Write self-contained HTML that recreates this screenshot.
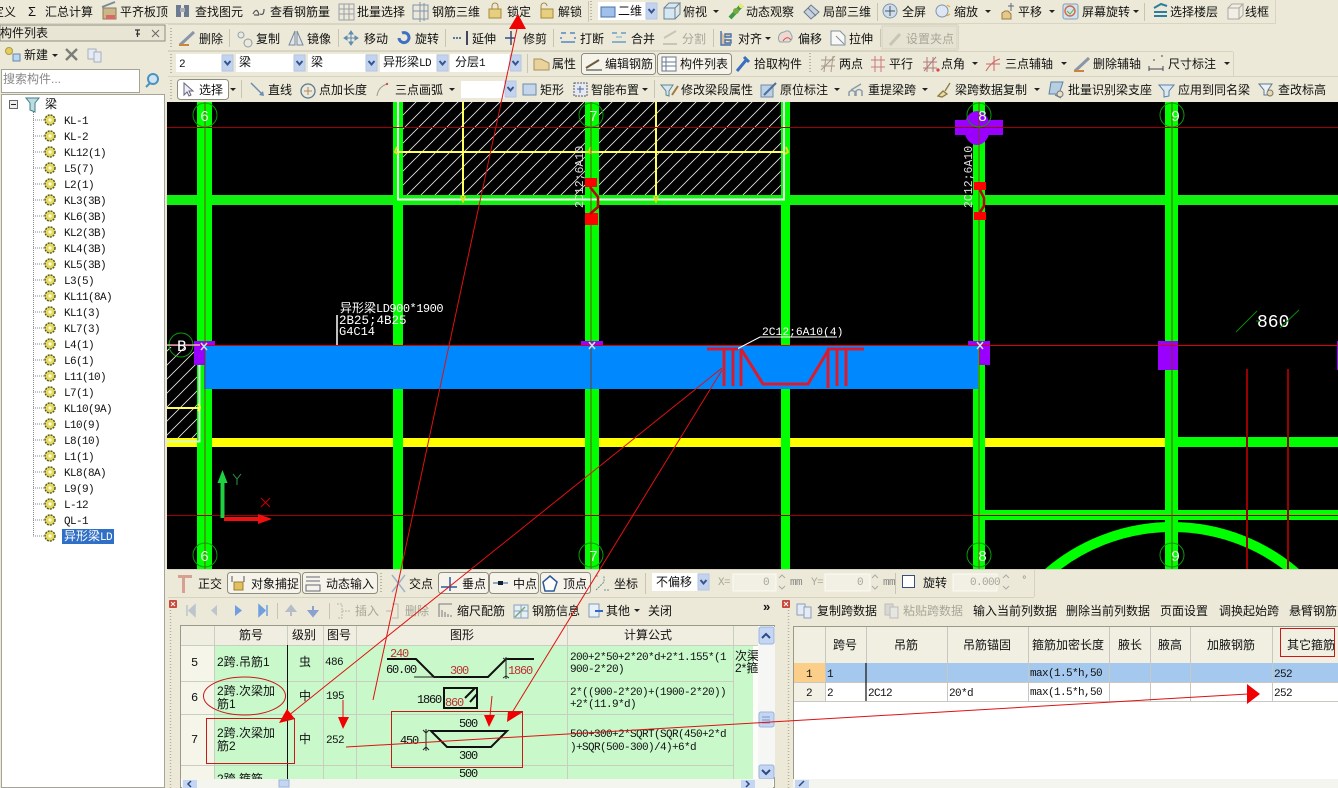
<!DOCTYPE html>
<html lang="zh-CN">
<head>
<meta charset="utf-8">
<title>钢筋算量</title>
<style>
html,body{margin:0;padding:0;width:1338px;height:788px;overflow:hidden;background:#ece9d8}
svg{display:block;position:absolute;left:0;top:0}
text{font-family:"Liberation Sans","WenQuanYi Zen Hei","Noto Sans CJK SC",sans-serif;font-size:12px;fill:#111;white-space:pre}
.g{fill:#a8a698}
.m{font-family:"Liberation Mono","WenQuanYi Zen Hei",monospace;font-size:11px;letter-spacing:-.6px}
.n{font-family:"Liberation Mono","WenQuanYi Zen Hei",monospace;font-size:12px;letter-spacing:-1.2px}
.cad{font-family:"Liberation Mono","WenQuanYi Zen Hei",monospace;fill:#fff}
.r{fill:#b33}
</style>
</head>
<body>
<svg width="1338" height="788" viewBox="0 0 1338 788" xmlns="http://www.w3.org/2000/svg">
<defs>
<pattern id="h" patternUnits="userSpaceOnUse" width="14" height="14"><path d="M0 14L14 0M-2 2L2 -2M12 16L16 12" stroke="#e8e8e8" stroke-width=".8"/></pattern>
<g id="cb"><rect x="0" y="0" width="11" height="16" fill="#c3d3ee" stroke="#b4c6e6"/><path d="M2.5 6l3 3.5 3-3.5" fill="none" stroke="#34558f" stroke-width="2"/></g>
<g id="ar"><path d="M0 0h6l-3 3z" fill="#222"/></g>
<g id="gr"><path d="M-17 0h11" stroke="#888" stroke-dasharray="1 1"/><circle r="5" fill="#e5dc5a" stroke="#5a5a20" stroke-dasharray="2 1" stroke-width="1.5"/><circle r="1.5" fill="#fff"/></g>
<g id="grip"><path d="M0 0V20" stroke="#a9a590" stroke-dasharray="1 2" stroke-width="1.5"/></g>
</defs>

<!-- TOOLBAR BANDS -->
<rect width="1338" height="788" fill="#ece9d8"/>
<path d="M0 23.5H1276M1275.5 0V23" stroke="#d8d5c3"/>
<path d="M168 24.5H958M958.5 25V50M168 50.5H958" stroke="#d8d5c3"/>
<path d="M168 51.5H1233M1233.5 52V76M168 76.5H1338" stroke="#d6d3c0"/>
<path d="M588.5 1V22M877.5 3V21M1144.5 3V21M229.5 29V47M338.5 29V47M445.5 29V47M553.5 29V47M713.5 29V47M880.5 29V47M527.5 54V73M241.5 80V98M654.5 80V98" stroke="#c8c5b2"/>
<use href="#grip" x="171" y="28"/><use href="#grip" x="171" y="54"/><use href="#grip" x="171" y="80"/><use href="#grip" x="810" y="53"/><use href="#grip" x="381" y="573"/><use href="#grip" x="591" y="1"/>

<!-- ROW 1 -->
<text x="-8" y="16">定义</text>
<text x="28" y="16" style="font-size:13px">Σ</text><text x="45" y="16">汇总计算</text>
<g><rect x="103" y="8" width="13" height="11" fill="#c9b78a" stroke="#8a7a55"/><path d="M102 7l13-5" stroke="#7a8a9a" stroke-width="2"/><rect x="106" y="15" width="9" height="4" fill="#d66"/></g><text x="120" y="16">平齐板顶</text>
<g fill="#6a7a90"><rect x="176" y="5" width="5" height="12"/><rect x="184" y="5" width="5" height="12"/><rect x="180" y="8" width="5" height="4" fill="#aab"/></g><text x="195" y="16">查找图元</text>
<path d="M253 14q3-6 5-2t-1 3h-3M260 14q4 2 4-5" fill="none" stroke="#555" stroke-width="1.2"/><text x="270" y="16">查看钢筋量</text>
<path d="M339 4h15v16h-15zM339 9h15M339 14h15M344 4v16M349 4v16" fill="none" stroke="#9aa0a8"/><text x="357" y="16">批量选择</text>
<path d="M413 5h15v14h-15zM420 2v20M413 11h15M424 3v18" fill="none" stroke="#7f93ad"/><text x="432" y="16">钢筋三维</text>
<g><rect x="489" y="9" width="12" height="9" fill="#e8cf7f" stroke="#a58a3d"/><path d="M492 9V6a3 3 0 0 1 6 0v3" fill="none" stroke="#a58a3d"/></g><text x="507" y="16">锁定</text>
<g><rect x="541" y="9" width="12" height="9" fill="#e8cf7f" stroke="#a58a3d"/><path d="M541 9V6a3 3 0 0 1 6 0" fill="none" stroke="#a58a3d"/></g><text x="558" y="16">解锁</text>
<rect x="598" y="2" width="48" height="18" fill="#fff"/><rect x="601" y="7" width="14" height="10" fill="#9fc0ea" stroke="#4a70a8"/><text x="618" y="15">二维</text><use href="#cb" x="646" y="3"/>
<path d="M664 8h11v11h-11zM664 8l5-5h11l-5 5M675 19l5-5V3" fill="#d5e7f2" stroke="#6c8296"/><text x="683" y="16">俯视</text><use href="#ar" x="713" y="10"/>
<path d="M730 18l12-13" stroke="#3d9a44" stroke-width="4"/><circle cx="736" cy="11" r="3" fill="#7a4"/><circle cx="741" cy="6" r="2" fill="#ee6"/><text x="746" y="16">动态观察</text>
<path d="M804 12l7-7 8 7-8 7z" fill="#c8d2dd" stroke="#6a7a8c"/><path d="M808 8l8 8" stroke="#6a7a8c"/><text x="823" y="16">局部三维</text>
<circle cx="890" cy="11" r="7" fill="#cfdcea" stroke="#7f95ad"/><path d="M890 6v10M885 11h10" stroke="#456" /><text x="902" y="16">全屏</text>
<circle cx="942" cy="11" r="6" fill="#dde6f2" stroke="#7f95ad"/><path d="M947 5l3 2M947 16l3-2" stroke="#e49a20"/><text x="954" y="16">缩放</text><use href="#ar" x="985" y="10"/>
<path d="M1002 19v-6l3-2 3 0 3 3 0 5z" fill="#e6c98a" stroke="#9a7a44"/><path d="M1011 3v8M1008 6h6" stroke="#667"/><text x="1018" y="16">平移</text><use href="#ar" x="1049" y="10"/>
<rect x="1063" y="4" width="15" height="15" rx="2" fill="#cfe4ee" stroke="#7fa0b8"/><circle cx="1070" cy="11" r="5" fill="none" stroke="#d9654a" stroke-width="1.4"/><path d="M1067 11l3 3 4-5" fill="none" stroke="#6a4"/><text x="1082" y="16">屏幕旋转</text><use href="#ar" x="1133" y="10"/>
<path d="M1154 8l7-4 6 2M1154 12h13M1154 16h13" fill="none" stroke="#2c7ea0" stroke-width="2"/><text x="1170" y="16">选择楼层</text>
<path d="M1228 8h11v11h-11zM1228 8l4-4h11l-4 4M1239 19l4-4V4" fill="#f2f0e6" stroke="#a9a9a0"/><text x="1245" y="16">线框</text>

<!-- ROW 2 -->
<path d="M180 45l14-13" stroke="#8a96a8" stroke-width="3"/><path d="M179 45h10" stroke="#c9863a" stroke-width="2"/><text x="199" y="43">删除</text>
<circle cx="241" cy="35" r="3" fill="none" stroke="#8fa2b6"/><circle cx="248" cy="43" r="4" fill="none" stroke="#8f9aa6"/><text x="256" y="43">复制</text>
<path d="M289 45l6-14v14zM303 45l-6-14v14z" fill="#dfe5ed" stroke="#7a8a9a"/><text x="307" y="43">镜像</text>
<path d="M351 31v14M344 38h14M351 31l-2 3h4zM351 45l-2-3h4zM344 38l3-2v4zM358 38l-3-2v4z" fill="#5e8bb0" stroke="#5e8bb0"/><text x="364" y="43">移动</text>
<path d="M399 38a5 5 0 1 0 3-5" fill="none" stroke="#3f70c4" stroke-width="3"/><text x="415" y="43">旋转</text>
<path d="M453 38h8" stroke="#5878a0" stroke-dasharray="2 1" stroke-width="2"/><path d="M467 31v14" stroke="#446" stroke-width="2"/><text x="472" y="43">延伸</text>
<path d="M505 38h10" stroke="#5878a0" stroke-width="2"/><path d="M511 31v14" stroke="#446" stroke-width="1.5"/><text x="523" y="43">修剪</text>
<path d="M561 33h5M570 33h5M561 42h14M561 37v2M575 37v2" stroke="#7aa0c8" stroke-width="2"/><text x="580" y="43">打断</text>
<path d="M612 33h5M621 33h5M612 42h14" stroke="#8ab0c8" stroke-width="2"/><path d="M616 37h6" stroke="#7ac" /><text x="631" y="43">合并</text>
<path d="M663 44h14M664 38l12-7" stroke="#c8c5b4" stroke-width="2"/><text class="g" x="682" y="43">分割</text>
<path d="M721 31v14h10M725 34h6v3h-6zM725 40h6v3h-6z" fill="#d8c2a0" stroke="#4a72a8" stroke-width="1.4"/><text x="738" y="43">对齐</text><use href="#ar" x="765" y="37"/>
<path d="M780 42a6 6 0 0 1 4-10q5-3 7 2 3 5-2 8z" fill="#f0d8d0" stroke="#8aa"/><path d="M783 41q4-6 8-1" stroke="#c55" fill="none"/><text x="798" y="43">偏移</text>
<path d="M831 31h9l5 5v9h-14zM836 36l8 8" fill="#f8f8f4" stroke="#7f8f9f"/><text x="849" y="43">拉伸</text>
<rect x="882" y="26" width="75" height="23" fill="#e6e3d2" stroke="#d5d2c0"/><path d="M890 45l10-11" stroke="#c8c5b4" stroke-width="3"/><text class="g" x="906" y="43">设置夹点</text>

<!-- ROW 3 -->
<g><rect x="176" y="54" width="46" height="18" fill="#fff"/><text class="m" x="179" y="67">2</text><use href="#cb" x="222" y="55"/>
<rect x="236" y="54" width="58" height="18" fill="#fff"/><text x="239" y="66">梁</text><use href="#cb" x="294" y="55"/>
<rect x="308" y="54" width="58" height="18" fill="#fff"/><text x="311" y="66">梁</text><use href="#cb" x="366" y="55"/>
<rect x="380" y="54" width="57" height="18" fill="#fff"/><text x="383" y="66">异形梁<tspan class="m">LD</tspan></text><use href="#cb" x="437" y="55"/>
<rect x="450" y="54" width="60" height="18" fill="#fff"/><text x="455" y="66">分层<tspan class="m">1</tspan></text><use href="#cb" x="510" y="55"/></g>
<path d="M534 59h7l8 4v7h-15z" fill="#e9d39a" stroke="#a89060"/><text x="552" y="68">属性</text>
<rect x="581.500" y="53.500" width="74" height="21" rx="3" fill="#f6f4ea" stroke="#8d8d80"/><path d="M586 68l13-8" stroke="#6a5a3a" stroke-width="2"/><path d="M586 70h16" stroke="#333"/><text x="605" y="68">编辑钢筋</text>
<rect x="657.500" y="53.500" width="74" height="21" rx="3" fill="#f6f4ea" stroke="#8d8d80"/><path d="M662 57h14v14h-14zM666 57v14M662 62h14M662 66h14" fill="#fff" stroke="#66788c"/><text x="680" y="68">构件列表</text>
<path d="M737 71l10-12M744 57l5 5" stroke="#3a6fc0" stroke-width="3"/><text x="754" y="68">拾取构件</text>
<path d="M821 60h14M821 66h14M826 56l-2 16M833 56l-2 16M821 70l14-14" stroke="#a89888" fill="none"/><text x="839" y="68">两点</text>
<path d="M871 60h14M871 67h14M875 56v16M881 56v16" stroke="#c87a7a" fill="none"/><text x="889" y="68">平行</text>
<path d="M923 62h14M923 68h14M927 57v15M933 57v15M924 71l12-14" stroke="#b07a7a" fill="none"/><circle cx="938" cy="70" r="1.600" fill="#d44"/><text x="941" y="68">点角</text><use href="#ar" x="972" y="62"/>
<path d="M986 64h14M994 56v15M986 71q6-10 14-12" stroke="#c66" fill="none"/><text x="1005" y="68">三点辅轴</text><use href="#ar" x="1061" y="62"/>
<path d="M1075 71l14-13" stroke="#8a96a8" stroke-width="3"/><path d="M1074 71h10" stroke="#c9863a" stroke-width="2"/><text x="1093" y="68">删除辅轴</text>
<path d="M1149 69h14M1149 66v5M1163 66v5M1153 60h2M1161 56h2" stroke="#445"/><text x="1168" y="68">尺寸标注</text><use href="#ar" x="1224" y="62"/>

<!-- ROW 4 -->
<rect x="177.500" y="79.500" width="51" height="20" rx="3" fill="#fff" stroke="#8d8d80"/><path d="M184 83v12l3-3 2 4 2-1-2-4h4z" fill="#eef" stroke="#667"/><text x="199" y="94">选择</text><use href="#ar" x="230" y="88"/>
<path d="M251 83l12 12" stroke="#6a8cb0" stroke-width="1.500"/><path d="M264 96l-5-1 4-4z" fill="#6a8cb0"/><text x="268" y="94">直线</text>
<circle cx="308" cy="91" r="7" fill="none" stroke="#5a7a90" stroke-width="1.300"/><path d="M304 91h8M308 87v8" stroke="#a86"/><text x="319" y="94">点加长度</text>
<path d="M377 96q1-9 10-12" fill="none" stroke="#998"/><circle cx="387" cy="84" r="1.200" fill="#c55"/><text x="395" y="94">三点画弧</text><use href="#ar" x="449" y="88"/>
<rect x="461" y="81" width="44" height="17" fill="#fff"/><use href="#cb" x="505" y="81"/>
<rect x="523" y="84" width="13" height="11" fill="#c5d6ea" stroke="#6c8cb0"/><text x="540" y="94">矩形</text>
<rect x="574" y="83" width="13" height="13" fill="#e6eaf0" stroke="#556" stroke-dasharray="2 1"/><path d="M580 86v7M577 89h7" stroke="#46a"/><text x="591" y="94">智能布置</text><use href="#ar" x="642" y="88"/>
<path d="M661 85h12l-4 6v5l-3-1v-4z" fill="#d8e6f0" stroke="#5a8a90"/><path d="M672 95l6-9" stroke="#9a7a44" stroke-width="2"/><text x="681" y="94">修改梁段属性</text>
<rect x="761" y="85" width="12" height="12" fill="#bcd0e6" stroke="#6f8cab"/><path d="M764 95l12-12" stroke="#4a6f9c" stroke-width="2"/><text x="780" y="94">原位标注</text><use href="#ar" x="834" y="88"/>
<path d="M849 96v-4q3-3 6 0v4M856 96v-5q3-3 6 0v5M851 90l10-6" fill="none" stroke="#8a9aa8" stroke-width="1.500"/><text x="868" y="94">重提梁跨</text><use href="#ar" x="922" y="88"/>
<path d="M938 96l5-5 4 3-5 3zM945 91l5-8" fill="#e8dca0" stroke="#8a7a44" stroke-width="1.300"/><text x="955" y="94">梁跨数据复制</text><use href="#ar" x="1034" y="88"/>
<path d="M1049 94h10l4-12h-12zM1055 95l6 3" fill="#b6cee0" stroke="#5a82a6"/><circle cx="1060" cy="94" r="3" fill="#e8e2c8" stroke="#777"/><text x="1068" y="94">批量识别梁支座</text>
<path d="M1159 85h15l-5 6v5l-5 1v-6z" fill="#dbe8f2" stroke="#5a82a6"/><text x="1178" y="94">应用到同名梁</text>
<path d="M1259 84h13l-4 6v5h-4v-5z" fill="#eef2f6" stroke="#5a7a8c"/><circle cx="1270" cy="93" r="3" fill="#ead9a8" stroke="#777"/><text x="1278" y="94">查改标高</text>

<!-- LEFT PANEL -->
<rect x="0" y="25" width="165" height="16" fill="#e8e5d5" stroke="#8e8d80"/>
<text x="0" y="37" style="font-size:12px">构件列表</text>
<path d="M135 30h5M137.500 30v7M136 34h4" stroke="#333" stroke-width="1.200"/><path d="M152 30l7 7M159 30l-7 7" stroke="#666"/>
<circle cx="9" cy="51" r="3.500" fill="#e6cd62" stroke="#b09a3a"/><rect x="13" y="54" width="7" height="7" fill="#bcd6ef" stroke="#5f89b0"/><text x="24" y="59">新建</text><use href="#ar" x="52" y="54"/>
<path d="M66 49l11 11M77 49l-11 11" stroke="#7d7d78" stroke-width="2.400"/>
<path d="M88 49h8v10h-8z" fill="#e6eaf2" stroke="#a6b0c0"/><path d="M94 52h7v10h-7z" fill="#e6eaf2" stroke="#a6b0c0"/>
<rect x="1.500" y="69.500" width="138" height="23" fill="#fff" stroke="#a6a496"/><text x="3" y="83" fill="#8a8a8a" style="fill:#888">搜索构件...</text>
<circle cx="153" cy="79" r="5" fill="#cfe5f3" stroke="#4d93bf" stroke-width="2"/><path d="M150 83l-4 4" stroke="#4d93bf" stroke-width="2"/>
<rect x="1.500" y="94.500" width="163" height="693" fill="#fff" stroke="#a6a496"/>
<path d="M33.500 112V536" stroke="#888" stroke-dasharray="1 1"/>
<rect x="9.500" y="100.500" width="8" height="8" fill="#eee" stroke="#666"/><path d="M11 104.500h5" stroke="#222"/>
<path d="M26 98h13l-4 5v9l-5-2v-7z" fill="#bcdde0" stroke="#3f7d8c"/><text x="45" y="108">梁</text>
<use href="#gr" x="50" y="120"/><use href="#gr" x="50" y="136"/><use href="#gr" x="50" y="152"/><use href="#gr" x="50" y="168"/><use href="#gr" x="50" y="184"/><use href="#gr" x="50" y="200"/><use href="#gr" x="50" y="216"/><use href="#gr" x="50" y="232"/><use href="#gr" x="50" y="248"/><use href="#gr" x="50" y="264"/><use href="#gr" x="50" y="280"/><use href="#gr" x="50" y="296"/><use href="#gr" x="50" y="312"/><use href="#gr" x="50" y="328"/><use href="#gr" x="50" y="344"/><use href="#gr" x="50" y="360"/><use href="#gr" x="50" y="376"/><use href="#gr" x="50" y="392"/><use href="#gr" x="50" y="408"/><use href="#gr" x="50" y="424"/><use href="#gr" x="50" y="440"/><use href="#gr" x="50" y="456"/><use href="#gr" x="50" y="472"/><use href="#gr" x="50" y="488"/><use href="#gr" x="50" y="504"/><use href="#gr" x="50" y="520"/><use href="#gr" x="50" y="536"/>
<g class="m"><text class="m" x="64" y="124">KL-1</text><text class="m" x="64" y="140">KL-2</text><text class="m" x="64" y="156">KL12(1)</text><text class="m" x="64" y="172">L5(7)</text><text class="m" x="64" y="188">L2(1)</text><text class="m" x="64" y="204">KL3(3B)</text><text class="m" x="64" y="220">KL6(3B)</text><text class="m" x="64" y="236">KL2(3B)</text><text class="m" x="64" y="252">KL4(3B)</text><text class="m" x="64" y="268">KL5(3B)</text><text class="m" x="64" y="284">L3(5)</text><text class="m" x="64" y="300">KL11(8A)</text><text class="m" x="64" y="316">KL1(3)</text><text class="m" x="64" y="332">KL7(3)</text><text class="m" x="64" y="348">L4(1)</text><text class="m" x="64" y="364">L6(1)</text><text class="m" x="64" y="380">L11(10)</text><text class="m" x="64" y="396">L7(1)</text><text class="m" x="64" y="412">KL10(9A)</text><text class="m" x="64" y="428">L10(9)</text><text class="m" x="64" y="444">L8(10)</text><text class="m" x="64" y="460">L1(1)</text><text class="m" x="64" y="476">KL8(8A)</text><text class="m" x="64" y="492">L9(9)</text><text class="m" x="64" y="508">L-12</text><text class="m" x="64" y="524">QL-1</text></g>
<rect x="62" y="529" width="52" height="15" fill="#2f6fc6"/><text x="64" y="540" style="fill:#fff">异形梁<tspan class="m" style="fill:#fff">LD</tspan></text>

<!-- CAD CANVAS -->
<svg x="167" y="102" width="1171" height="467" viewBox="167 102 1171 467">
<rect x="167" y="102" width="1171" height="467" fill="#000"/>
<!-- hatch -->
<rect x="403" y="102" width="182" height="93" fill="url(#h)"/><rect x="599" y="102" width="182" height="93" fill="url(#h)"/><rect x="167" y="347" width="30" height="93" fill="url(#h)"/>
<!-- green -->
<g fill="#0f0">
<rect x="167" y="195" width="1171" height="10" fill="#12f012"/>
<rect x="197" y="102" width="15" height="467"/><rect x="393" y="102" width="10" height="467"/><rect x="585" y="102" width="14" height="467"/><rect x="781" y="102" width="9" height="467"/><rect x="973" y="102" width="12" height="467"/><rect x="1165" y="102" width="13" height="467"/>
</g>
<path d="M167 442.500H1165" stroke="#ff0" stroke-width="9"/>
<rect x="197" y="438" width="15" height="9" fill="#0f0"/><rect x="393" y="438" width="10" height="9" fill="#0f0"/><rect x="585" y="438" width="14" height="9" fill="#0f0"/><rect x="781" y="438" width="9" height="9" fill="#0f0"/><rect x="973" y="438" width="12" height="9" fill="#0f0"/>
<rect x="1178" y="437" width="160" height="10" fill="#0f0"/><rect x="985" y="510" width="353" height="10" fill="#0f0"/>
<path d="M1045.800 575A190 190 0 0 1 1298.200 575" fill="none" stroke="#0f0" stroke-width="10"/>
<rect x="1165" y="520" width="13" height="49" fill="#0f0"/>
<!-- room lines -->
<path d="M398 102V199.500H784V102" fill="none" stroke="#eaf7ea" stroke-width="2"/>
<path d="M398 152H785M463 102V196M656 102V196" stroke="#ffff60" stroke-width="2" fill="none"/>
<path d="M397 147l-2 5 3 2M591 147l-2 5 3 2M786 147l2 5-3 2M461 196l2 5 2-5M654 196l2 5 2-5" fill="none" stroke="#e0e020" stroke-width="2"/>
<path d="M199.500 365V441.500H167" fill="none" stroke="#d5f5d5" stroke-width="2"/>
<path d="M167 408H200" stroke="#ffff60" stroke-width="2"/><path d="M198 404q4 3 0 7" fill="none" stroke="#ffff60" stroke-width="2"/>
<!-- beam -->
<rect x="204" y="346" width="774" height="43" fill="#0088ff"/>
<!-- purple -->
<g fill="#9900ff">
<rect x="194" y="341" width="11" height="24"/><rect x="194" y="341" width="21" height="5"/>
<rect x="581" y="341" width="22" height="5"/><rect x="968" y="341" width="22" height="5"/><rect x="979" y="341" width="11" height="24"/>
<rect x="1158" y="341" width="20" height="29"/><rect x="1337" y="341" width="1" height="29"/>
<rect x="955" y="120" width="48" height="15"/><ellipse cx="977" cy="128" rx="13" ry="17"/>
</g>
<!-- red axes -->
<g stroke="#a00000" stroke-width="1" fill="none">
<path d="M167 127.500H1338M167 515.500H1338"/><path d="M205 102V569M591 102V569M979 102V569M1172 102V569" stroke="#7a3a10" stroke-width=".9"/>
</g>
<path d="M167 345.500H1338" stroke="#e00000"/>
<path d="M1247 369V569M1288 369V569" stroke="#900" stroke-width="2"/>
<!-- rebar side -->
<path d="M585 178h12v9h-12zM585 213h13v12h-13zM974 182h12v8h-12zM974 212h12v8h-12z" fill="#f00"/>
<path d="M590 187l8 10v10l-8 7M980 190l4 8v8l-4 6" fill="none" stroke="#c00000" stroke-width="2.500"/>
<text class="cad" transform="translate(583 208) rotate(-90)" style="font-size:11.500px;fill:#ddd">2C12;6A10</text>
<text class="cad" transform="translate(972 208) rotate(-90)" style="font-size:11.500px;fill:#ddd">2C12;6A10</text>
<!-- axis bubbles -->
<g fill="none" stroke="#0a9a0a"><circle cx="205" cy="115" r="12"/><circle cx="591" cy="115" r="12"/><circle cx="979" cy="115" r="12"/><circle cx="1172" cy="115" r="12"/><circle cx="205" cy="555" r="12"/><circle cx="591" cy="555" r="12"/><circle cx="979" cy="555" r="12"/><circle cx="1172" cy="555" r="12"/><circle cx="181" cy="345" r="12"/></g>
<g class="cad" style="font-size:16px">
<text class="cad" x="200" y="121" style="font-size:15px;fill:#dfd">6</text><text class="cad" x="589" y="121" style="font-size:15px;fill:#dfd">7</text><text class="cad" x="978" y="121" style="font-size:15px;fill:#dfd">8</text><text class="cad" x="1171" y="121" style="font-size:15px;fill:#dfd">9</text>
<text class="cad" x="200" y="561" style="font-size:15px;fill:#dfd">6</text><text class="cad" x="589" y="561" style="font-size:15px;fill:#dfd">7</text><text class="cad" x="978" y="561" style="font-size:15px;fill:#dfd">8</text><text class="cad" x="1171" y="561" style="font-size:15px;fill:#dfd">9</text>
<text class="cad" x="177" y="351" style="font-size:16px">B</text></g>
<path d="M167 345H200" stroke="#fff"/>
<path d="M589 342l6 7M595 342l-6 7M201 343l6 7M207 343l-6 7M977 342l6 7M983 342l-6 7" stroke="#bfe8ff" stroke-width="1.500"/>
<!-- labels -->
<text x="340" y="312" style="fill:#fff;font-size:12px">异形梁<tspan class="cad" style="font-size:12px;letter-spacing:-.5px">LD900*1900</tspan></text>
<text class="cad" x="339" y="324" style="font-size:12.500px">2B25;4B25</text><text class="cad" x="339" y="335" style="font-size:12px">G4C14</text>
<path d="M337 315V345" stroke="#fff" stroke-width="1.500"/>
<text class="cad" x="762" y="335" style="font-size:11.300px">2C12;6A10(4)</text>
<path d="M737 349L760 337H837" stroke="#fff" fill="none"/>
<path d="M707 349H738M724 349V386M733 349V386M741 349V386M741 349L763 384H808L829 349M827 349H864M828 349V388M837 349V386M846 349V386" fill="none" stroke="#dc1a2c" stroke-width="3"/>
<text class="cad" x="1257" y="327" style="font-size:18px">860</text>
<path d="M1236 332l21-21M1280 328l19-18M1256 321h4" stroke="#0b8a0b" fill="none"/>
<!-- UCS -->
<path d="M222.500 518V480" stroke="#20d040" stroke-width="4"/><path d="M222.500 470l-5 13h10z" fill="#20d040"/>
<path d="M224 519H262" stroke="#f01010" stroke-width="4"/><path d="M272 519l-14-5v10z" fill="#f01010"/>
<path d="M233 474l4 5 4-5M237 479v6" fill="none" stroke="#2a9a4a"/><path d="M261 498l9 9M270 498l-9 9" stroke="#c00"/>
</svg>

<!-- BOTTOM BAR -->
<path d="M168 569.500H1338M1034.500 570V597M168 597.500H1034" stroke="#d6d3c0"/>
<path d="M178 575h14v3h-7v15h-3v-15h-4z" fill="#d8a090"/><text x="198" y="588">正交</text>
<rect x="227.500" y="572.500" width="73" height="21" rx="3" fill="#f6f4ea" stroke="#8d8d80"/><path d="M232 576v6M244 576v6" stroke="#555"/><rect x="234" y="582" width="9" height="8" fill="#e0c060" stroke="#9a8030"/><text x="251" y="588">对象捕捉</text>
<rect x="302.500" y="572.500" width="75" height="21" rx="3" fill="#f6f4ea" stroke="#8d8d80"/><path d="M306 577h14M306 581h14M306 585h14v6h-14z" fill="none" stroke="#667"/><text x="326" y="588">动态输入</text>
<path d="M392 575l13 17M405 575l-13 17" stroke="#9db3c8" stroke-width="1.500"/><text x="409" y="588">交点</text>
<rect x="438.500" y="572.500" width="50" height="21" rx="3" fill="#f6f4ea" stroke="#8d8d80"/><path d="M441 587h16M450 577v14" stroke="#2a5a9a" stroke-width="1.500"/><text x="462" y="588">垂点</text>
<rect x="489.500" y="572.500" width="49" height="21" rx="3" fill="#f6f4ea" stroke="#8d8d80"/><path d="M493 583h15" stroke="#2a5a9a"/><rect x="498" y="581" width="5" height="4" fill="#123"/><text x="513" y="588">中点</text>
<rect x="540.500" y="572.500" width="50" height="21" rx="3" fill="#f6f4ea" stroke="#8d8d80"/><path d="M550 576l7 6-3 9h-9l-2-9z" fill="#fff" stroke="#2a5a9a" stroke-width="1.500"/><text x="563" y="588">顶点</text>
<path d="M596 590l8-8v-6M604 590h6M596 576h3" stroke="#6a90a0" fill="none" stroke-dasharray="2 1"/><text x="614" y="588">坐标</text>
<path d="M645.500 573V594M895.500 573V594" stroke="#c8c5b2"/>
<rect x="652" y="573" width="46" height="18" fill="#fff"/><text x="656" y="586">不偏移</text><use href="#cb" x="698" y="574"/>
<text class="m g" x="718" y="585">X=</text><rect x="733" y="574" width="43" height="17" fill="#f2f0e4" stroke="#fbfbf4"/><text class="m g" x="763" y="585">0</text><path d="M779 578l3-3 3 3M779 586l3 3 3-3" stroke="#aaa" fill="none"/><text class="m" x="790" y="585" style="fill:#888">mm</text>
<text class="m g" x="811" y="585">Y=</text><rect x="825" y="574" width="45" height="17" fill="#f2f0e4" stroke="#fbfbf4"/><text class="m g" x="857" y="585">0</text><path d="M872 578l3-3 3 3M872 586l3 3 3-3" stroke="#aaa" fill="none"/><text class="m" x="883" y="585" style="fill:#888">mm</text>
<rect x="902.500" y="575.500" width="12" height="12" fill="#fff" stroke="#33507a"/><text x="923" y="587">旋转</text>
<rect x="953" y="574" width="44" height="17" fill="#f2f0e4" stroke="#fbfbf4"/><text class="m g" x="970" y="585">0.000</text><path d="M1003 578l3-3 3 3M1003 586l3 3 3-3" stroke="#aaa" fill="none"/><text class="m" x="1021" y="583" style="fill:#888">°</text>

<!-- LOWER LEFT PANEL -->
<rect x="169" y="600" width="8" height="8" rx="1" fill="#c94a3a"/><path d="M171 602l4 4M175 602l-4 4" stroke="#fff"/>
<path d="M170.500 610V788M788.500 610V788" stroke="#b5b19a" stroke-dasharray="1 2" stroke-width="1.500"/>
<path d="M187 605v11M195 605l-6 5.500 6 5.500z" fill="#bcc4cc" stroke="#bcc4cc" stroke-width="1.500"/>
<path d="M217 605l-6 5.500 6 5.500z" fill="#bcc4cc"/><path d="M235 605l7 5.500-7 5.500z" fill="#6f9fe0"/><path d="M259 605l6 5.500-6 5.500zM267 605v11" fill="#6f9fe0" stroke="#6f9fe0" stroke-width="1.500"/>
<path d="M277.500 603V619M329.500 603V619" stroke="#c8c5b2"/>
<path d="M291 606l-4 5h8zM291 611v5" fill="#b4bcc8" stroke="#b4bcc8" stroke-width="2"/><path d="M313 616l-4-5h8zM313 611v-5" fill="#8aa0d0" stroke="#8aa0d0" stroke-width="2"/>
<path d="M337 604h5v14h-5M342 611h8" fill="none" stroke="#b8b8ae" stroke-dasharray="2 1"/><text class="g" x="355" y="615">插入</text>
<path d="M386 611h6M392 604h6v14h-6" fill="none" stroke="#b8b8ae"/><text class="g" x="405" y="615">删除</text>
<path d="M439 617V604h13M442 617v-7M445 617v-5M448 617v-3M451 617v-2" fill="none" stroke="#777"/><text x="457" y="615">缩尺配筋</text>
<path d="M514 605h14v13h-14zM514 611h14M521 605v13" fill="#e6eef6" stroke="#8aa0b8"/><path d="M515 617l10-10" stroke="#7a7" stroke-width="1.500"/><text x="532" y="615">钢筋信息</text>
<rect x="589" y="604" width="10" height="13" fill="#e8f0f8" stroke="#7f9cb8"/><path d="M595 611h8" stroke="#36c" stroke-width="2"/><text x="606" y="615">其他</text><use href="#ar" x="634" y="609"/><text x="648" y="615">关闭</text>
<text x="763" y="611" style="font-size:13px;font-weight:bold">»</text>
<!-- table -->
<rect x="180" y="625" width="595" height="163" fill="#fff"/>
<rect x="180" y="625" width="578" height="20" fill="#f0eee0"/>
<rect x="214" y="645" width="519" height="134" fill="#c9f9cb"/><rect x="733" y="645" width="25" height="134" fill="#fdfdf9"/><rect x="733" y="645" width="20" height="69" fill="#c9f9cb"/><rect x="733" y="714" width="20" height="65" fill="#c9f9cb"/>
<rect x="180" y="645" width="34" height="134" fill="#f6f5ea"/>
<path d="M214.500 625V779M323.500 625V779M356.500 625V779M567.500 625V779M733.500 625V779M180 645.500H758M180 681.500H733M180 714.500H733M180 765.500H733" stroke="#c8cfc0"/>
<path d="M287.500 645V779" stroke="#111"/><path d="M287.500 625V645" stroke="#c8cfc0"/>
<rect x="180.500" y="625.500" width="594" height="162" fill="none" stroke="#9a9a88"/>
<text x="239" y="639">筋号</text><text x="292" y="639">级别</text><text x="327" y="639">图号</text><text x="450" y="639">图形</text><text x="624" y="639">计算公式</text>
<text class="n" x="191" y="666">5</text><text class="n" x="191" y="701">6</text><text class="n" x="191" y="743">7</text>
<text x="217" y="666">2跨.吊筋1</text><text x="217" y="695">2跨.次梁加</text><text x="217" y="708">筋1</text><text x="217" y="737">2跨.次梁加</text><text x="217" y="750">筋2</text><text x="217" y="783">2跨.箍筋</text>
<text x="299" y="666">虫</text><text x="299" y="700">中</text><text x="299" y="743">中</text>
<text class="m" x="325" y="665">486</text><text class="m" x="326" y="699">195</text><text class="m" x="326" y="743">252</text>
<!-- shapes -->
<text class="n r" x="390" y="657">240</text><text class="n" x="386" y="673">60.00</text><text class="n r" x="450" y="674">300</text><text class="n r" x="508" y="674">1860</text>
<path d="M387 659H416L434 677H488L506 659H534" fill="none" stroke="#111" stroke-width="2"/><path d="M414 677H440M506 657V679M503 658l3 2 3-2M503 678l3-2 3 2" fill="none" stroke="#222"/>
<text class="n" x="417" y="703">1860</text><rect x="444" y="688" width="33" height="20" fill="none" stroke="#111" stroke-width="2"/><path d="M465 698l10-10M470 702l7-8" stroke="#111" stroke-width="2"/><text class="n r" x="445" y="706">860</text>
<text class="n" x="459" y="727">500</text><path d="M431 731H507L491 747H447Z" fill="none" stroke="#111" stroke-width="2"/><text class="n" x="459" y="759">300</text><text class="n" x="400" y="744">450</text><path d="M426 729V751M423 730l3 3 3-3M423 750l3-3 3 3" fill="none" stroke="#222"/>
<text class="n" x="459" y="777">500</text>
<text class="m" x="570" y="660">200+2*50+2*20*d+2*1.155*(1</text><text class="m" x="570" y="672">900-2*20)</text>
<text class="m" x="570" y="695">2*((900-2*20)+(1900-2*20))</text><text class="m" x="570" y="707">+2*(11.9*d)</text>
<text class="m" x="570" y="737">500+300+2*SQRT(SQR(450+2*d</text><text class="m" x="570" y="750">)+SQR(500-300)/4)+6*d</text>
<text x="735" y="660">次渠</text><text x="735" y="672">2*箍</text>
<!-- scrollbars -->
<rect x="758" y="627" width="17" height="150" fill="#f6f7f4"/>
<rect x="759" y="627" width="15" height="17" rx="2" fill="#c5d6f2" stroke="#9ab4dc"/><path d="M762 638l4-4 4 4" fill="none" stroke="#2a4a86" stroke-width="2"/>
<rect x="759" y="712" width="15" height="15" rx="2" fill="#c5d6f2" stroke="#9ab4dc"/><path d="M762 717h8M762 720h8M762 723h8" stroke="#7a96c6"/>
<rect x="759" y="765" width="15" height="14" rx="2" fill="#c5d6f2" stroke="#9ab4dc"/><path d="M762 770l4 4 4-4" fill="none" stroke="#2a4a86" stroke-width="2"/>
<rect x="182" y="779" width="591" height="9" fill="#f4f5ee"/>
<rect x="183" y="780" width="14" height="8" fill="#c5d6f2"/><path d="M191 781l-3 3 3 3" fill="none" stroke="#2a4a86" stroke-width="1.500"/>
<rect x="279" y="780" width="10" height="7" fill="#c5d6f2" stroke="#9ab4dc"/><rect x="741" y="780" width="14" height="8" fill="#c5d6f2"/><path d="M746 781l3 3-3 3" fill="none" stroke="#2a4a86" stroke-width="1.500"/>

<!-- LOWER RIGHT PANEL -->
<rect x="782" y="600" width="8" height="8" rx="1" fill="#c94a3a"/><path d="M784 602l4 4M788 602l-4 4" stroke="#fff"/>
<path d="M797 604h8v11h-8z" fill="#e6eaf2" stroke="#8aa0c0"/><path d="M804 607h7v11h-7z" fill="#e6eaf2" stroke="#8aa0c0"/><text x="817" y="615">复制跨数据</text>
<path d="M885 604h8v11h-8z" fill="#d8d8d0" stroke="#bbb"/><path d="M890 607h8v11h-8z" fill="#e6e6e0" stroke="#bbb"/><text class="g" x="903" y="615">粘贴跨数据</text>
<text x="973" y="615">输入当前列数据</text><text x="1066" y="615">删除当前列数据</text><text x="1160" y="615">页面设置</text><text x="1219" y="615">调换起始跨</text><text x="1289" y="615">悬臂钢筋</text>
<rect x="793" y="626" width="545" height="153" fill="#fff"/>
<rect x="793" y="626" width="545" height="37" fill="#f0efe2"/>
<rect x="793" y="663" width="32" height="19" fill="#fbcf8a"/><rect x="825" y="663" width="513" height="19" fill="#a4c8ee"/><rect x="793" y="682" width="32" height="19" fill="#f3f1e6"/>
<path d="M825.500 627V701M947.500 627V701M1028.500 627V701M1109.500 627V701M1150.500 627V701M1190.500 627V701M1272.500 627V701M793 682.500H1338M793 701.500H1338" stroke="#c8c8c0"/>
<path d="M866.500 627V663" stroke="#c8c8c0"/><path d="M866 663V701" stroke="#111" stroke-width="1.200"/>
<path d="M793.500 626V779M793 626.500H1338" stroke="#9a9a88"/>
<text x="833" y="649">跨号</text><text x="894" y="649">吊筋</text><text x="963" y="649">吊筋锚固</text><text x="1032" y="649">箍筋加密长度</text><text x="1118" y="649">腋长</text><text x="1158" y="649">腋高</text><text x="1207" y="649">加腋钢筋</text><text x="1287" y="649">其它箍筋</text>
<text class="m" x="806" y="677">1</text><text class="m" x="827" y="677">1</text><text class="m" x="1030" y="676">max(1.5*h,50</text><text class="m" x="1274" y="677">252</text>
<text class="m" x="806" y="696">2</text><text class="m" x="827" y="696">2</text><text class="m" x="868" y="696">2C12</text><text class="m" x="949" y="696">20*d</text><text class="m" x="1030" y="695">max(1.5*h,50</text><text class="m" x="1274" y="696">252</text>
<rect x="793" y="779" width="545" height="9" fill="#f4f5ee"/><rect x="795" y="780" width="14" height="8" fill="#c5d6f2"/><path d="M799 786l5-5" stroke="#2a4a86" stroke-width="1.500"/>

<!-- RED ANNOTATIONS -->
<g fill="none" stroke="#e01010" stroke-width="1">
<path d="M373 700L518 24"/><path d="M722 368L288 716"/><path d="M722 370L510 716"/>
<path d="M346 747L1248 694"/>
<path d="M343 700V718M492 696L490 716"/>
</g>
<g fill="#f00000">
<path d="M518 14L509 29H526Z"/><path d="M279 723L287 709L295 719Z"/><path d="M507 722L508 711L523 712Z"/><path d="M1260 694L1247 684V704Z"/><path d="M343 729L338 717H349Z"/><path d="M489 727L484 715H495Z"/>
</g>
<g fill="none" stroke="#c81818" stroke-width="1">
<rect x="206.500" y="718.500" width="88" height="45"/><rect x="391.500" y="711.500" width="131" height="56"/><ellipse cx="244.500" cy="696" rx="41" ry="19"/><rect x="1280.500" y="628.500" width="54" height="28"/>
</g>
</svg>
</body>
</html>
